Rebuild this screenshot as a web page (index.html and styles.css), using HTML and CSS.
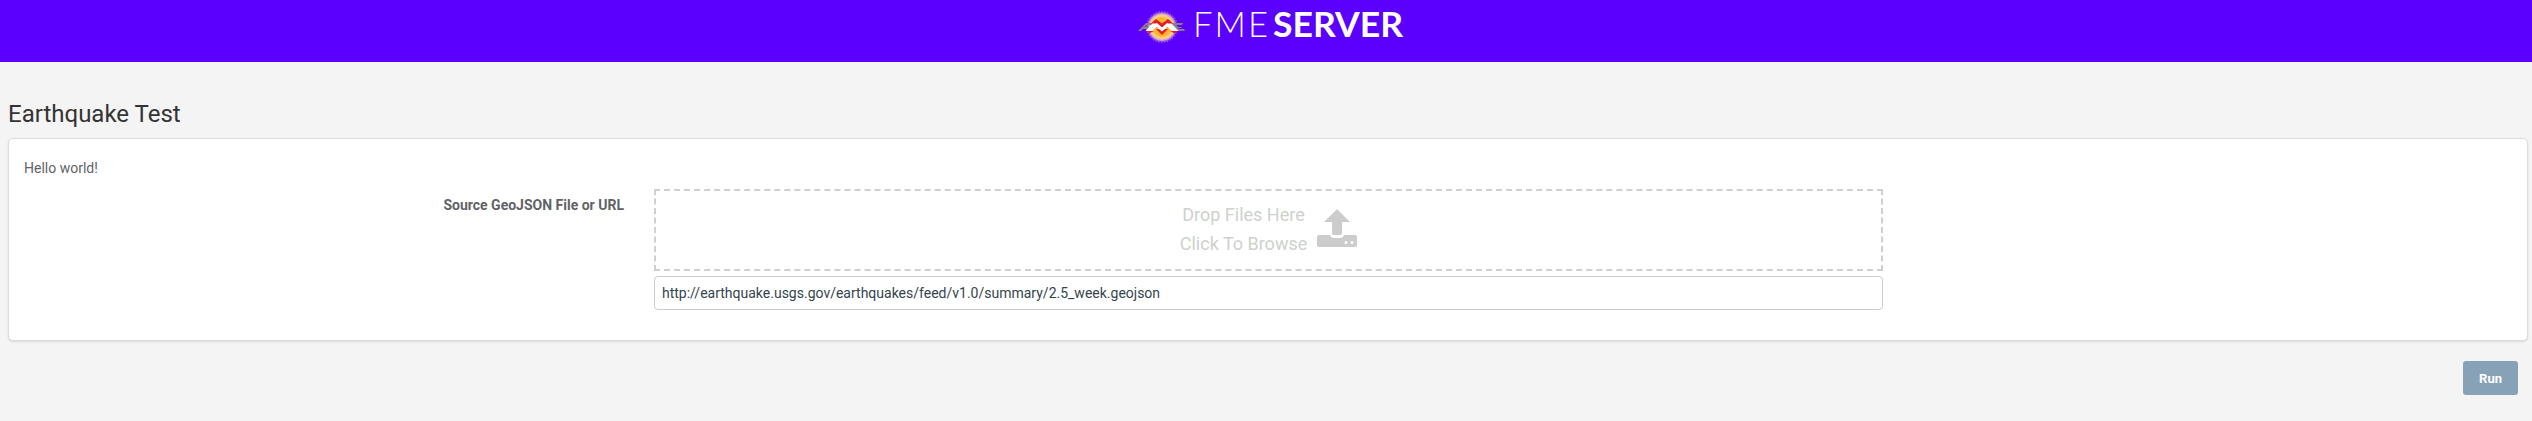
FILE: index.html
```
<!DOCTYPE html>
<html lang="en">
<head>
<meta charset="utf-8">
<title>Earthquake Test</title>
<link rel="stylesheet" href="styles.css">
</head>
<body>
<header class="header">
  <svg class="logo" width="270" height="50" viewBox="0 0 270 50" role="img" aria-label="FME Server">
    <defs>
      <radialGradient id="sun">
        <stop offset="0" stop-color="#ffc020"/>
        <stop offset=".55" stop-color="#ffb52e"/>
        <stop offset=".74" stop-color="#fcd08c"/>
        <stop offset=".86" stop-color="#d09cc8"/>
        <stop offset="1" stop-color="#5b00ff"/>
      </radialGradient>
    </defs>
    <circle cx="31" cy="27" r="15.500" fill="url(#sun)"/>
    <circle cx="31" cy="27" r="15.500" fill="none" stroke="#b49ad0" stroke-width="1" stroke-dasharray="1 2"/>
    <path d="M7 31L15 23H24L22 25H16L14 27H19L18 29H12L10 31Z" fill="#8e7d80"/>
    <path d="M38 23H52L51 25H45L46 27H51L50 28H47L48 29H53L54 31H44Z" fill="#8e7d80"/>
    <path d="M20 23.500L25 19L31 23.500L37 19L42 23.500L36 28H26Z" fill="#ee1825"/>
    <path d="M15 31H23L18 33.500ZM39 31H47L44 33.500ZM25 29L31 35L37 29Z" fill="#ee1825"/>
    <path d="M14.500 31L21.500 23.500H24.500L26 23L31 27.500L36 23L37.500 23.500H40.500L47.500 31H41L36.500 27L31 31.500L25.500 27L21 31Z" fill="#fff"/>
    <text class="logo-light" x="62" y="37" textLength="75">FME</text>
    <text class="logo-bold" x="142" y="37" textLength="130" lengthAdjust="spacingAndGlyphs">SERVER</text>
  </svg>
</header>
<main class="page">
  <h1 class="title">Earthquake Test</h1>
  <section class="card">
    <p class="intro">Hello world!</p>
    <div class="row">
      <label class="label" for="source">Source GeoJSON File or URL</label>
      <div class="field">
        <div class="dropzone">
          <div class="drop-text"><div>Drop Files Here</div><div>Click To Browse</div></div>
          <svg class="drop-icon" width="40" height="38" viewBox="0 0 40 38">
            <path d="M20 0L33 13H25V24Q25 26 23 26H17Q15 26 15 24V13H7Z"/>
            <path fill-rule="evenodd" d="M2 26H13Q14 29 17 29H23Q26 29 27 26H38Q40 26 40 28V36Q40 38 38 38H2Q0 38 0 36V28Q0 26 2 26ZM27.500 33.500a1.500 1.500 0 1 0 3 0a1.500 1.500 0 1 0-3 0ZM33.500 33.500a1.500 1.500 0 1 0 3 0a1.500 1.500 0 1 0-3 0Z"/>
          </svg>
        </div>
        <input class="input" id="source" type="text" value="http://earthquake.usgs.gov/earthquakes/feed/v1.0/summary/2.5_week.geojson">
      </div>
    </div>
  </section>
  <div class="actions"><button class="run" type="button">Run</button></div>
</main>
</body>
</html>
```
FILE: styles.css
```
* { box-sizing: border-box; }
body {
  margin: 0;
  background: #f4f4f4;
  font-family: Roboto, "Liberation Sans", sans-serif;
  font-size: 14px;
  line-height: 20px;
  color: #5f6367;
}
.header {
  height: 62px;
  background: #5b00ff;
  display: flex;
  justify-content: center;
}
.logo { display: block; overflow: visible; }
.logo-light, .logo-bold { font-family: Lato, sans-serif; font-size: 34.5px; fill: #fff; }
.logo-light { font-weight: 300; }
.logo-bold { font-weight: 700; }
.page { padding: 36px 4px 0 8px; }
.title {
  margin: 0;
  height: 40px;
  line-height: 32px;
  font-size: 24px;
  font-weight: 400;
  color: #333;
}
.card {
  height: 203px;
  padding: 19px 15px 0;
  background: #fff;
  border: 1px solid #dcdcdc;
  border-radius: 5px;
  box-shadow: 0 1px 2px rgba(0, 0, 0, .12);
}
.intro { margin: 0 0 11px; }
.row { display: flex; gap: 30px; }
.label { width: 600px; padding-top: 6px; text-align: right; font-weight: 700; }
.field { width: 1229px; }
.dropzone {
  height: 82px;
  padding-bottom: 3px;
  border: 2px dashed #d0d0d0;
  display: flex;
  justify-content: center;
  align-items: center;
  gap: 10px;
}
.drop-text { font-size: 18px; line-height: 29px; text-align: center; color: #cdd2cd; }
.drop-icon { margin-bottom: 2px; fill: #ccc; }
.input {
  display: block;
  width: 100%;
  height: 34px;
  margin-top: 5px;
  padding: 0 7px;
  border: 1px solid #ccc;
  border-radius: 4px;
  background: #fff;
  font: inherit;
  color: #34444e;
}
.actions { display: flex; justify-content: flex-end; padding: 20px 10px 0 0; }
.run {
  width: 55px;
  height: 34px;
  padding: 0;
  border: 0;
  border-radius: 3px;
  background: #87a2b7;
  color: #fff;
  font: 700 13px Roboto, sans-serif;
}
```
